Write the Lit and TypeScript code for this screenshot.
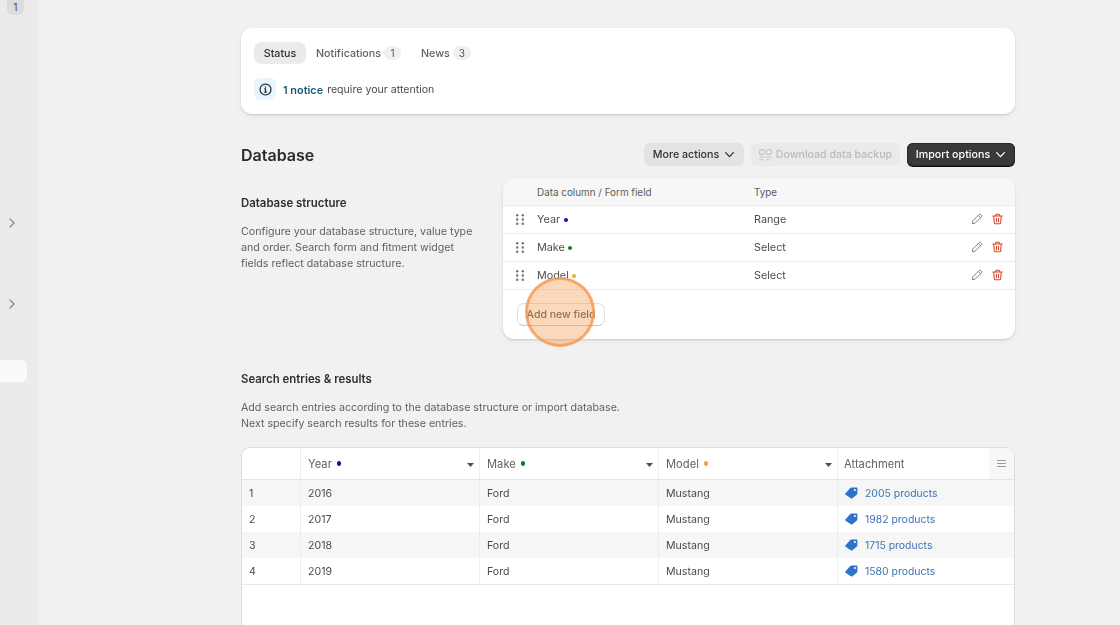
import { LitElement, html, css, svg } from "lit";
import { customElement } from "lit/decorators.js";

const chevron = html`<svg class="chev" viewBox="0 0 12 12" width="11" height="11"><path d="M1.800 4l4.200 4.300L10.200 4" fill="none" stroke="currentColor" stroke-width="1.400" stroke-linecap="round" stroke-linejoin="round"/></svg>`;
const side = html`<svg viewBox="0 0 8 10" width="8" height="10"><path d="M2 1l4 4-4 4" fill="none" stroke="#8d8d8d" stroke-width="1.400" stroke-linecap="round" stroke-linejoin="round"/></svg>`;
const grip = html`<svg viewBox="0 0 8 11" width="8" height="11" fill="#6f6f6f">${[1.2, 5.5, 9.8].map((y) => svg`<circle cx="1.200" cy=${y} r="1.200"/><circle cx="6.800" cy=${y} r="1.200"/>`)}</svg>`;
const pencil = html`<svg viewBox="0 0 12 12" width="12" height="12"><path d="M1.300 10.700l.6-2.900 6.200-6.200a1.100 1.100 0 0 1 1.600 0l.7.7a1.100 1.100 0 0 1 0 1.600L4.200 10.100z M7.300 2.500l2.300 2.300" fill="none" stroke="#808080" stroke-width="1" stroke-linejoin="round"/></svg>`;
const trash = html`<svg viewBox="0 0 12 12" width="11" height="12"><path d="M.8 2.700h10.400M4 2.500V1.500a.7.7 0 0 1 .7-.7h2.600a.7.7 0 0 1 .7.7v1M2 2.800l.5 7.500a1 1 0 0 0 1 .9h5a1 1 0 0 0 1-.9l.5-7.500M4.900 5.200v3.800M7.100 5.200v3.800" fill="none" stroke="#d3492f" stroke-width="1.200" stroke-linecap="round" stroke-linejoin="round"/></svg>`;
const tag = html`<svg viewBox="0 0 14 13" width="13" height="12"><path d="M.6 6.700L5.700 1.200A1.800 1.800 0 0 1 7 .6h5.300c.6 0 1.100.5 1.100 1.100v5a1.800 1.800 0 0 1-.5 1.300L8 12.200c-.5.500-1.200.5-1.700 0L.6 8.300a1.100 1.100 0 0 1 0-1.600z" fill="#2f73c9"/><circle cx="10.700" cy="3.300" r="1.100" fill="#fff"/></svg>`;
const caret = html`<svg class="caret" viewBox="0 0 7 4" width="7" height="4"><path d="M0 0h7L3.500 4z" fill="#4a4f5c"/></svg>`;
const info = html`<svg viewBox="0 0 14 14" width="13" height="13"><circle cx="7" cy="7" r="5.900" fill="none" stroke="#1f2a30" stroke-width="1.300"/><path d="M5.700 6.300H7v3.400M5.600 9.800h2.900" fill="none" stroke="#1f2a30" stroke-width="1.200"/><circle cx="7" cy="4.300" r=".8" fill="#1f2a30"/></svg>`;
const backup = html`<svg viewBox="0 0 13 12" width="13" height="12"><g fill="none" stroke="#c4c4c4" stroke-width="1.100"><rect x=".6" y=".6" width="4.800" height="4.800" rx="1.500"/><rect x="7.600" y=".6" width="4.800" height="4.800" rx="1.500"/><path d="M.6 8h5M7.600 8h4.800M.6 10.800h3.500M7.600 10.800h2.800"/></g></svg>`;

const fields = [
  { name: "Year", type: "Range", color: "#1010b0" },
  { name: "Make", type: "Select", color: "#127a1a" },
  { name: "Model", type: "Select", color: "#f0a830" },
];
const rows = [
  ["1", "2016", "2005 products"],
  ["2", "2017", "1982 products"],
  ["3", "2018", "1715 products"],
  ["4", "2019", "1580 products"],
];

@customElement("app-root")
export class AppRoot extends LitElement {
  static styles = css`
    :host { display: block; height: 625px; overflow: hidden; background: #f1f1f1; font-family: Inter, "Liberation Sans", sans-serif; font-size: 11px; color: #4a4a4a; position: relative; }
    .shell { display: flex; height: 625px; filter: blur(.3px); }
    .sidebar { width: 38px; flex: none; background: #ebebeb; display: flex; flex-direction: column; align-items: flex-start; }
    .count { margin-left: 7px; width: 17px; height: 15px; border-radius: 0 0 6px 6px; background: #dcdcdc; font-size: 10.500px; display: flex; align-items: center; justify-content: center; color: #555; }
    .side-arrow { margin-left: 8px; height: 10px; display: flex; }
    .a1 { margin-top: 203px; }
    .a2 { margin-top: 71px; }
    .side-item { margin-top: 51px; width: 27px; height: 22px; background: #fafafa; border-radius: 0 6px 6px 0; }
    .main { flex: 1; min-width: 0; }
    .topline { height: 9px; border-bottom: 1px solid #ececec; }
    .content { width: 774px; margin-left: 203px; padding-top: 18px; }
    .card { background: #fff; border-radius: 11px; box-shadow: 0 1px 2px rgba(0,0,0,.14), 0 2px 6px rgba(0,0,0,.05); }
    .status { height: 86px; padding: 14px 13px 0; box-sizing: border-box; }
    .tabs { display: flex; align-items: center; height: 22px; }
    .tab { display: flex; align-items: center; font-weight: 500; color: #616161; font-size: 10.700px; }
    .tab.active { width: 52px; height: 22px; justify-content: center; background: #ebebeb; border-radius: 7px; color: #303030; }
    .tab.n { margin-left: 10px; }
    .tab.w { margin-left: 20px; }
    .pill { margin-left: 3px; min-width: 17px; height: 14px; border-radius: 7px; background: #f0f0f0; font-size: 10px; font-weight: 400; display: flex; align-items: center; justify-content: center; color: #555; }
    .tab.w .pill { min-width: 18px; margin-left: 3px; }
    .notice { display: flex; align-items: center; margin-top: 14px; height: 22px; }
    .notice-icon { width: 22px; height: 22px; border-radius: 6px; background: #eaf4ff; display: flex; align-items: center; justify-content: center; margin-right: 7px; }
    .notice b { font-weight: 600; color: #1b5a78; margin-right: 4px; position: relative; top: 1px; font-size: 10.900px; }
    .notice span { color: #4a4a4a; font-size: 10.600px; }
    .heading { display: flex; align-items: center; margin-top: 29px; height: 23px; }
    h1 { font-size: 16px; font-weight: 600; color: #2a2a2a; margin: 0; flex: 1; }
    .btn { height: 23px; box-sizing: border-box; display: flex; align-items: center; justify-content: center; gap: 5px; border-radius: 6px; font-weight: 500; font-size: 10.700px; }
    .more { width: 100px; background: #e3e3e3; color: #303030; }
    .dl { width: 149px; margin-left: 7px; background: #eaeaea; color: #bababa; gap: 4px; font-size: 10.600px; }
    .imp { width: 108px; margin-left: 7px; background: #3a3a3a; color: #fff; box-shadow: 0 1px 0 #111, inset 0 0 0 1px #2a2a2a; }
    .chev { display: block; }
    .structure { display: flex; margin-top: 13px; }
    .intro { width: 262px; flex: none; }
    h2 { font-size: 11.400px; font-weight: 600; color: #2f2f2f; margin: 0; line-height: 16px; }
    .intro h2 { margin-top: 16px; }
    p { margin: 0; color: #616161; font-size: 10.650px; line-height: 16px; }
    .intro p { margin-top: 13px; width: 240px; }
    .fields { width: 512px; height: 160px; overflow: hidden; }
    .fhead, .frow { display: grid; grid-template-columns: 34px 217px 1fr auto; align-items: center; }
    .fhead { height: 26px; background: #f7f7f7; font-size: 9.900px; color: #5c5c5c; }
    .frow { height: 28px; box-sizing: border-box; border-top: 1px solid #ececec; padding-bottom: 1px; color: #4d4d4d; font-size: 10.800px; }
    .fhead > :first-child, .frow > :first-child { display: flex; justify-content: center; }
    .dot { display: inline-block; width: 4px; height: 4px; border-radius: 50%; margin-left: 3.500px; vertical-align: middle; }
    .actions { display: flex; gap: 9px; padding-right: 12px; }
    .ffoot { border-top: 1px solid #ececec; padding: 13px 14px; }
    .add { width: 88px; height: 23px; box-sizing: border-box; border: 1px solid #e0e0e0; border-bottom-color: #c4c4c4; border-radius: 7px; display: flex; align-items: center; justify-content: center; font-size: 10.500px; font-weight: 500; color: #555; }
    .search { margin-top: 32px; }
    .search p { margin-top: 13px; }
    .table { margin-top: 15px; height: 200px; background: #fff; border: 1px solid #dedede; border-bottom: 0; border-radius: 9px 9px 0 0; overflow: hidden; box-sizing: border-box; }
    .tr { display: grid; grid-template-columns: 59px 179px 179px 179px 1fr; height: 26px; align-items: stretch; font-size: 10.600px; color: #4a4a4a; }
    .tr > div { display: flex; align-items: center; padding-left: 7px; border-right: 1px solid #ededed; }
    .tr > div:last-child { border-right: 0; }
    .tr.odd { background: #f6f6f6; }
    .tr.last { border-bottom: 1px solid #e9e9e9; }
    .tr.th { height: 32px; border-bottom: 1px solid #e4e4e4; box-sizing: border-box; color: #626262; font-size: 11.200px; }
    .tr.th .dot { margin-left: 5px; width: 4.500px; height: 4.500px; }
    .caret { margin-left: auto; margin-right: 5px; margin-top: 2px; }
    .tr.th .att { padding: 0 0 0 6px; justify-content: space-between; }
    .menu { width: 25px; height: 31px; background: #f7f7f7; display: flex; align-items: center; justify-content: center; }
    .link { color: #3f73b6; margin-left: 7px; font-size: 10.450px; }
    .ring { position: absolute; left: 525px; top: 277px; width: 70px; height: 70px; box-sizing: border-box; border-radius: 50%; background: rgba(247,158,84,.4); border: 3px solid rgba(241,152,80,.75); pointer-events: none; }
  `;

  render() {
    return html`
      <div class="shell">
        <aside class="sidebar">
          <div class="count">1</div>
          <div class="side-arrow a1">${side}</div>
          <div class="side-arrow a2">${side}</div>
          <div class="side-item"></div>
        </aside>
        <main class="main">
          <div class="topline"></div>
          <div class="content">
            <section class="card status">
              <div class="tabs">
                <div class="tab active">Status</div>
                <div class="tab n">Notifications<span class="pill">1</span></div>
                <div class="tab w">News<span class="pill">3</span></div>
              </div>
              <div class="notice">
                <div class="notice-icon">${info}</div>
                <b>1 notice</b><span>require your attention</span>
              </div>
            </section>
            <div class="heading">
              <h1>Database</h1>
              <div class="btn more">More actions ${chevron}</div>
              <div class="btn dl">${backup} Download data backup</div>
              <div class="btn imp">Import options ${chevron}</div>
            </div>
            <div class="structure">
              <div class="intro">
                <h2>Database structure</h2>
                <p>Configure your database structure, value type and order. Search form and fitment widget fields reflect database structure.</p>
              </div>
              <section class="card fields">
                <div class="fhead"><span></span><span>Data column / Form field</span><span>Type</span><span></span></div>
                ${fields.map((f) => html`
                  <div class="frow">
                    <span>${grip}</span>
                    <span>${f.name}<i class="dot" style="background:${f.color}"></i></span>
                    <span>${f.type}</span>
                    <span class="actions">${pencil}${trash}</span>
                  </div>`)}
                <div class="ffoot"><div class="add">Add new field</div></div>
              </section>
            </div>
            <section class="search">
              <h2>Search entries &amp; results</h2>
              <p>Add search entries according to the database structure or import database.<br />Next specify search results for these entries.</p>
              <div class="table">
                <div class="tr th">
                  <div></div>
                  ${fields.map((f) => html`<div>${f.name}<i class="dot" style="background:${f.color}"></i>${caret}</div>`)}
                  <div class="att">Attachment<span class="menu"><svg viewBox="0 0 9 7" width="9" height="7"><path d="M0 .5h9M0 3.500h9M0 6.500h9" stroke="#9a9a9a" stroke-width="1"/></svg></span></div>
                </div>
                ${rows.map((r, i) => html`
                  <div class="tr ${i % 2 === 0 ? "odd" : ""} ${i === 3 ? "last" : ""}">
                    <div>${r[0]}</div><div>${r[1]}</div><div>Ford</div><div>Mustang</div>
                    <div>${tag}<span class="link">${r[2]}</span></div>
                  </div>`)}
              </div>
            </section>
          </div>
        </main>
      </div>
      <div class="ring"></div>
    `;
  }
}
